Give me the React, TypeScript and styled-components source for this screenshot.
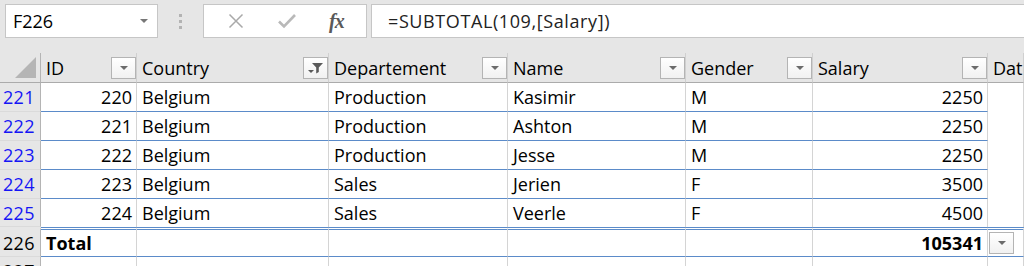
import React from 'react';
import styled, { createGlobalStyle } from 'styled-components';

const Global = createGlobalStyle`
  html, body { margin: 0; padding: 0; background: #ffffff; overflow: hidden; }
  body { width: 1024px; height: 266px; font-family: "Open Sans", Lato, sans-serif; color: #000; }
`;

const COLS = '41px 96px 192px 179px 178px 127px 175px 1fr';
const BLUE = '#5b8bc9';
const GRID = '#d4d4d4';
const FS = '18px';

const Page = styled.div`
  width: 1024px;
  height: 266px;
  overflow: hidden;
  background: #fff;
`;

const FormulaBar = styled.div`
  display: flex;
  align-items: flex-start;
  height: 53px;
  padding: 4px 0 0 5px;
  box-sizing: border-box;
  background: #e6e6e6;
`;

const Box = styled.div`
  height: 34px;
  box-sizing: border-box;
  background: #fff;
  border: 1px solid #c6c6c6;
  display: flex;
  align-items: center;
`;

const NameBox = styled(Box)`
  width: 153px;
  padding: 0 0 0 7px;
  justify-content: space-between;
  font-size: ${FS};
`;

const SmallArrow = styled.span`
  width: 0;
  height: 0;
  margin-right: 9px;
  border-left: 4px solid transparent;
  border-right: 4px solid transparent;
  border-top: 4px solid #777;
`;

const Dots = styled.div`
  width: 45px;
  height: 34px;
  display: flex;
  flex-direction: column;
  align-items: center;
  justify-content: center;
  gap: 3px;
  & > span { width: 3px; height: 3px; background: #b3b3b3; }
`;

const FuncBox = styled(Box)`
  width: 164px;
  justify-content: space-around;
  padding: 0 6px 0 8px;
`;

const Fx = styled.span`
  font-family: "Liberation Serif", serif;
  font-style: italic;
  font-weight: 700;
  font-size: 20px;
  color: #5a5a5a;
  letter-spacing: -1px;
`;

const FormulaInput = styled(Box)`
  flex: 1;
  margin-left: 4px;
  margin-right: -2px;
  padding-left: 16px;
  font-size: ${FS};
  letter-spacing: 0.6px;
  color: #222;
`;

const Row = styled.div<{ $h: number }>`
  display: grid;
  grid-template-columns: ${COLS};
  height: ${(p) => p.$h}px;
`;

const HeaderRow = styled(Row)`
  background: #e6e6e6;
`;

const Corner = styled.div`
  border-right: 1px solid #b4b4b4;
  border-bottom: 1px solid #ababab;
  display: flex;
  align-items: flex-end;
  justify-content: flex-end;
  padding: 0 4px 4px 0;
`;

const HeadCell = styled.div`
  display: flex;
  align-items: center;
  justify-content: space-between;
  padding-left: 5px;
  border-right: 1px solid #d0d0d0;
  border-bottom: 1px solid #ababab;
  font-size: ${FS};
  overflow: hidden;
  white-space: nowrap;
`;

const DropBtn = styled.div`
  width: 25px;
  height: 22px;
  box-sizing: border-box;
  border: 1px solid #b4b4b4;
  background: linear-gradient(#ffffff, #f1f1f1);
  display: flex;
  align-items: center;
  justify-content: center;
  flex-shrink: 0;
`;

const Tri = styled.span`
  width: 0;
  height: 0;
  border-left: 4px solid transparent;
  border-right: 4px solid transparent;
  border-top: 4px solid #6b6b6b;
`;

const RowHead = styled.div<{ $blue?: boolean; $top?: boolean }>`
  background: #e6e6e6;
  border-right: 1px solid #b4b4b4;
  border-top: ${(p) => (p.$top ? '3px solid #e6e6e6' : '0')};
  border-bottom: 1px solid #dadada;
  display: flex;
  align-items: center;
  justify-content: flex-end;
  padding-right: 5px;
  font-size: ${FS};
  letter-spacing: 0.4px;
  color: ${(p) => (p.$blue ? '#1515f5' : '#000')};
`;

const Cell = styled.div<{ $right?: boolean; $bold?: boolean; $noBottom?: boolean; $total?: boolean }>`
  display: flex;
  align-items: center;
  justify-content: ${(p) => (p.$right ? 'flex-end' : 'flex-start')};
  padding: 0 4px 0 5px;
  border-right: 1px solid ${GRID};
  border-bottom: ${(p) => (p.$noBottom ? '0' : `1px solid ${BLUE}`)};
  border-top: ${(p) => (p.$total ? `3px double ${BLUE}` : '0')};
  font-size: ${FS};
  font-weight: ${(p) => (p.$bold ? 700 : 400)};
  white-space: nowrap;
  overflow: hidden;
`;

const TotalDropCell = styled(Cell)`
  padding: 0 0 0 1px;
`;

const PlainCell = styled.div`
  border-right: 1px solid ${GRID};
`;

const FilterIcon = () => (
  <svg width="17" height="14" viewBox="0 0 17 14">
    <path d="M5 2h11l-4.2 4.5V11l-2.6 1.5V6.5z" fill="#5a5a5a" />
    <path d="M1 9h6l-3 3z" fill="#5a5a5a" />
  </svg>
);

const CornerTri = () => (
  <svg width="21" height="21" viewBox="0 0 21 21">
    <path d="M0 21L21 0V21z" fill="#b5b5b5" />
  </svg>
);

const headers = ['ID', 'Country', 'Departement', 'Name', 'Gender', 'Salary', 'Date'];

const data = [
  [221, 220, 'Belgium', 'Production', 'Kasimir', 'M', 2250],
  [222, 221, 'Belgium', 'Production', 'Ashton', 'M', 2250],
  [223, 222, 'Belgium', 'Production', 'Jesse', 'M', 2250],
  [224, 223, 'Belgium', 'Sales', 'Jerien', 'F', 3500],
  [225, 224, 'Belgium', 'Sales', 'Veerle', 'F', 4500],
];

export default function App() {
  return (
    <Page>
      <Global />
      <FormulaBar>
        <NameBox>
          F226
          <SmallArrow />
        </NameBox>
        <Dots>
          <span />
          <span />
          <span />
        </Dots>
        <FuncBox>
          <svg width="16" height="16" viewBox="0 0 16 16">
            <path d="M1.5 1.5l13 13M14.5 1.5l-13 13" stroke="#a9a9a9" strokeWidth="1.5" fill="none" />
          </svg>
          <svg width="20" height="16" viewBox="0 0 20 16">
            <path d="M2 8.5l5 5L18 2" stroke="#b9b9b9" strokeWidth="2.6" fill="none" />
          </svg>
          <Fx>fx</Fx>
        </FuncBox>
        <FormulaInput>=SUBTOTAL(109,[Salary])</FormulaInput>
      </FormulaBar>

      <HeaderRow $h={30}>
        <Corner>
          <CornerTri />
        </Corner>
        {headers.map((h, i) => (
          <HeadCell key={h}>
            {h}
            {i < 6 && <DropBtn>{i === 1 ? <FilterIcon /> : <Tri />}</DropBtn>}
          </HeadCell>
        ))}
      </HeaderRow>

      {data.map((r, idx) => {
        const last = idx === data.length - 1;
        return (
          <Row $h={last ? 28 : 29} key={r[0]}>
            <RowHead $blue>{r[0]}</RowHead>
            <Cell $right $noBottom={last}>{r[1]}</Cell>
            <Cell $noBottom={last}>{r[2]}</Cell>
            <Cell $noBottom={last}>{r[3]}</Cell>
            <Cell $noBottom={last}>{r[4]}</Cell>
            <Cell $noBottom={last}>{r[5]}</Cell>
            <Cell $right $noBottom={last}>{r[6]}</Cell>
            <PlainCell />
          </Row>
        );
      })}

      <Row $h={30}>
        <RowHead $top>226</RowHead>
        <Cell $bold $total>Total</Cell>
        <Cell $total />
        <Cell $total />
        <Cell $total />
        <Cell $total />
        <Cell $right $bold $total>105341</Cell>
        <TotalDropCell $total>
          <DropBtn>
            <Tri />
          </DropBtn>
        </TotalDropCell>
      </Row>

      <Row $h={29}>
        <RowHead>227</RowHead>
        <Cell $noBottom />
        <Cell $noBottom />
        <Cell $noBottom />
        <Cell $noBottom />
        <Cell $noBottom />
        <Cell $noBottom />
        <PlainCell />
      </Row>
    </Page>
  );
}
